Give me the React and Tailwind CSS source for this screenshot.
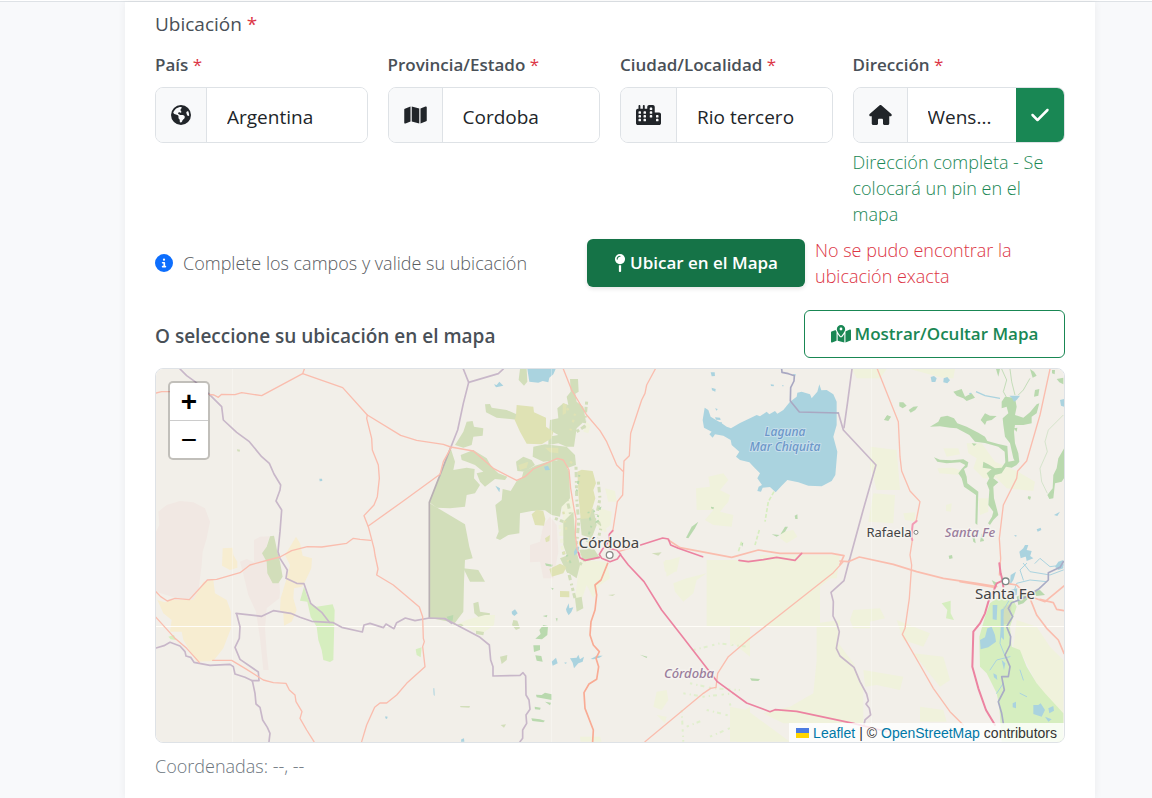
import React from "react";
import {
  FaEarthAmericas,
  FaMap,
  FaCity,
  FaHouse,
  FaCheck,
  FaMapPin,
  FaMapLocationDot,
  FaCircleInfo,
} from "react-icons/fa6";

const C = {
  scrub: "#d2deba",
  wood: "#b9d9ae",
  olive: "#dfe2b4",
  sand: "#f7edd1",
  rose: "#f1e8e3",
  water: "#aad3df",
  farm: "#f0f2dc",
  park: "#d6eebf",
  admin: "#c8b7c9",
  road: "#fabdae",
  trunk: "#ec83a1",
};

/* Each sheet holds shapes at three units per pixel, anchored at its own corner. */
function Sheet({ x, y, children }) {
  return <g transform={`translate(${x} ${y}) scale(0.33333)`}>{children}</g>;
}

function Lines({ color, width, paths }) {
  return (
    <g fill="none" stroke={color} strokeWidth={width} strokeLinejoin="round" strokeLinecap="round">
      {paths.map((d) => (
        <path key={d} d={d} />
      ))}
    </g>
  );
}

function Areas({ color, paths }) {
  return (
    <g fill={color}>
      {paths.map((d) => (
        <path key={d} d={d} />
      ))}
    </g>
  );
}

function MapDrawing() {
  return (
    <svg
      className="block h-[373px] w-full"
      viewBox="156 369 908 373"
      preserveAspectRatio="xMidYMid slice"
      role="img"
      aria-label="Mapa de la región de Córdoba"
    >
      <rect x="0" y="300" width="1300" height="500" fill="#f2efe9" />

      {/* Land cover */}
      <Sheet x={150} y={365}>
        <Areas
          color={C.rose}
          paths={[
            "M18 500 L28 480 L25 440 L50 420 L90 408 L130 412 L165 430 L180 470 L170 520 L158 560 L155 600 L145 680 L130 704 L80 700 L18 680 Z",
            "M312 525 L330 515 L358 514 L345 560 L385 600 L390 680 L388 700 L350 730 L345 790 L350 860 L356 915 L340 915 L330 820 L318 740 L295 690 L278 620 L270 590 L290 582 L312 592 Z",
          ]}
        />
        <Areas
          color={C.sand}
          paths={[
            "M218 550 L248 548 L250 570 L262 590 L262 608 L240 615 L216 602 Z",
            "M438 515 L450 535 L458 572 L486 580 L484 610 L465 650 L455 665 L432 670 L430 700 L440 735 L425 770 L402 782 L400 745 L390 735 L392 700 L410 640 L420 600 L405 570 L420 545 Z",
            "M22 705 L45 712 L60 705 L130 704 L160 650 L190 645 L195 685 L230 705 L243 740 L243 790 L220 850 L190 888 L140 890 L100 825 L95 800 L60 800 L65 765 L40 745 Z",
          ]}
        />
        <Areas
          color={C.scrub}
          paths={[
            "M360 514 L372 512 L376 530 L382 560 L390 590 L398 635 L385 655 L368 655 L352 625 L350 590 L336 565 L350 545 Z",
            "M261 253 L270 254 L269 260 L262 259 Z",
          ]}
        />
        <Areas color={C.water} paths={["M508 341 L516 341 L517 348 L509 349 Z"]} />
      </Sheet>
      <Sheet x={150} y={560}>
        <Areas
          color={C.park}
          paths={[
            "M462 80 L470 105 L480 130 L500 140 L548 133 L554 150 L550 300 L540 306 L520 300 L515 270 L505 240 L500 200 L482 170 L472 125 L450 122 Z",
            "M55 230 L72 225 L78 240 L62 238 Z",
            "M797 268 L815 262 L812 292 L800 285 Z",
          ]}
        />
        <Areas color={C.water} paths={["M706 469 L713 470 L711 477 L706 475 Z"]} />
      </Sheet>
      <Sheet x={420} y={365}>
        <Areas
          color={C.rose}
          paths={[
            "M330 540 L360 530 L370 480 L390 455 L410 480 L415 560 L400 640 L370 640 L360 590 L330 592 Z",
          ]}
        />
        <Areas
          color={C.farm}
          paths={[
            "M500 170 L512 180 L505 205 L490 200 Z",
            "M555 370 L585 378 L590 410 L565 410 Z",
            "M540 430 L575 440 L572 480 L545 500 L530 480 Z",
            "M420 400 L455 390 L465 470 L450 520 L420 510 L430 450 Z",
            "M480 585 L560 590 L570 640 L540 660 L520 700 L500 660 L480 720 L465 700 Z",
          ]}
        />
        <Areas
          color={C.scrub}
          paths={[
            "M28 412 L92 250 L105 290 L100 315 L140 308 L164 312 L162 340 L180 360 L165 385 L140 390 L135 425 L90 430 L50 428 Z",
            "M28 414 L135 478 L148 545 L158 580 L135 585 L132 650 L130 740 L100 780 L130 775 L130 785 L95 772 L28 758 Z",
            "M105 240 L130 200 L140 170 L158 168 L162 185 L190 190 L188 212 L160 215 L155 240 L130 248 Z",
            "M122 270 L160 255 L200 280 L215 305 L235 325 L262 335 L255 345 L225 342 L195 365 L180 350 L170 325 L190 320 L165 300 L140 290 L125 285 Z",
            "M195 118 L210 117 L215 128 L260 135 L300 152 L302 166 L270 162 L230 158 L198 142 Z",
            "M300 12 L320 12 L322 50 L312 62 L296 45 Z",
            "M450 42 L474 42 L476 80 L466 86 L470 110 L490 125 L497 165 L470 190 L462 245 L440 245 L415 235 L385 240 L385 215 L415 210 L388 195 L390 165 L415 160 L412 130 L430 115 L445 120 L440 95 L452 80 Z",
            "M340 245 L375 238 L440 245 L465 270 L468 300 L440 310 L410 285 L370 290 L338 275 Z",
            "M288 290 L310 275 L335 285 L345 300 L315 320 L292 318 Z",
            "M310 320 L345 302 L400 285 L430 290 L448 320 L450 400 L425 425 L420 455 L395 450 L375 436 L335 438 L300 445 L298 505 L265 510 L240 525 L228 520 L236 500 L226 420 L245 405 L248 372 L272 378 L290 348 L305 340 Z",
            "M430 470 L460 440 L470 560 L450 600 L430 540 Z",
            "M480 460 L520 430 L530 480 L515 520 L485 510 Z",
            "M420 580 L470 560 L480 600 L470 640 L440 620 Z",
            "M478 555 L520 548 L540 580 L490 590 Z",
            "M130 610 L175 615 L195 650 L150 650 Z",
            "M160 715 L175 710 L180 740 L210 745 L205 775 L185 765 L163 745 Z",
            "M465 700 L485 695 L490 730 L470 740 Z",
            "M695 565 L725 562 L715 572 Z",
          ]}
        />
        <Areas
          color={C.olive}
          paths={[
            "M290 120 L340 125 L342 142 L378 158 L378 185 L400 200 L395 220 L365 238 L320 236 L300 200 L284 165 L288 150 Z",
            "M472 320 L485 314 L518 318 L528 355 L520 375 L526 400 L508 460 L482 462 L476 400 Z",
            "M335 448 L350 434 L370 438 L376 462 L372 482 L345 480 Z",
            "M428 115 L440 118 L438 145 L428 150 Z",
            "M388 612 L420 596 L440 605 L430 625 L395 635 Z",
            "M420 678 L448 679 L448 697 L420 696 Z",
            "M295 300 L325 290 L320 308 L300 315 Z",
            "M375 248 L415 248 L415 265 L390 262 Z",
            "M375 520 L390 510 L388 528 L378 532 Z",
          ]}
        />
        {/* Broken hill cover west and north of the city */}
        <g fill="none" strokeWidth="9">
          <g stroke={C.scrub} strokeDasharray="9 7 16 11 5 8">
            <path d="M468 305 L470 400 L476 470 L470 540 M535 350 L540 400 L530 450 M440 400 L452 450 L450 520 M500 110 L492 190 M470 200 L500 180" />
            <path d="M430 560 L450 640 L465 700 M480 600 L500 560 L510 520 M520 460 L545 480 L535 520 M405 460 L430 470" />
          </g>
          <g stroke={C.wood} strokeWidth="6" strokeDasharray="5 13 9 17">
            <path d="M505 440 L515 480 L500 530 M478 330 L470 380 M520 440 L540 430 L530 470 L550 460 M440 570 L455 600" />
          </g>
          <g stroke={C.olive} strokeWidth="7" strokeDasharray="8 20 5 14">
            <path d="M440 130 L465 150 L450 200 M430 440 L440 500 M450 290 L465 300 M430 560 L445 590" />
          </g>
          <g stroke={C.farm} strokeDasharray="12 9">
            <path d="M545 470 L560 510 M420 480 L428 560 M490 600 L540 640" />
          </g>
        </g>
      </Sheet>
      <Sheet x={420} y={560}>
        <Areas
          color={C.farm}
          paths={[
            "M735 0 L760 0 L765 35 L740 50 Z",
            "M760 70 L800 55 L860 40 L860 200 L1200 200 L1200 0 L860 0 L860 40 L830 60 L820 100 L790 125 L765 95 Z",
            "M195 165 L225 165 L222 195 L180 225 L120 190 L140 180 Z",
            "M710 395 L740 390 L745 420 L725 450 L700 440 Z",
            "M710 465 L740 470 L735 490 Z",
            "M960 460 L990 440 L990 545 L950 545 Z",
            "M480 530 L540 530 L545 545 L482 545 Z",
            "M940 250 L990 200 L990 290 Z",
          ]}
        />
        <Areas
          color={C.wood}
          paths={[
            "M375 10 L398 14 L396 20 L378 17 Z",
            "M80 170 L100 165 L98 182 L85 182 Z",
            "M358 210 L370 195 L384 198 L382 225 L366 238 L346 236 L362 222 Z",
            "M340 256 L360 256 L360 270 L342 276 Z",
            "M346 286 L364 288 L368 305 L350 302 Z",
            "M348 404 L365 405 L375 398 L395 403 L395 420 L375 416 L350 412 Z",
            "M375 425 L393 428 L390 436 Z",
            "M344 440 L362 443 L360 449 L345 448 Z",
            "M334 475 L360 478 L375 482 L370 487 L337 483 Z",
            "M368 168 L382 165 L380 172 Z",
            "M407 175 L413 175 L411 185 Z",
            "M392 83 L401 85 L398 90 Z",
            "M660 284 L682 290 L680 294 Z",
          ]}
        />
        <Areas
          color={C.scrub}
          paths={[
            "M280 180 L292 182 L300 205 L288 210 L276 195 Z",
            "M168 212 L192 216 L190 226 L168 222 Z",
            "M240 290 L262 285 L260 300 L245 312 Z",
            "M120 438 L150 438 L148 443 L122 442 Z",
            "M242 495 L258 493 L252 503 Z",
            "M564 105 L586 103 L578 108 Z",
          ]}
        />
        <g fill="none" stroke="#e0efcd" strokeWidth="6" strokeDasharray="7 12 4 9 12 14">
          <path d="M820 270 L900 250 L980 260 M800 345 L850 340 M810 370 L880 385 L960 390 M790 400 L850 410 L940 400 M785 450 L790 545 M860 450 L940 470 M930 430 L945 540 M870 530 L940 500 M800 500 L850 480" />
        </g>
      </Sheet>
      <Sheet x={660} y={365}>
        <Areas
          color={C.farm}
          paths={[
            "M145 335 L190 325 L205 345 L180 375 L210 390 L205 410 L180 440 L220 450 L215 485 L160 480 L135 465 L160 435 L110 435 L108 370 L150 365 Z",
            "M365 500 L400 495 L412 515 L380 535 L360 520 Z",
            "M632 245 L710 255 L720 375 L650 375 L630 300 Z",
            "M640 385 L705 390 L700 475 L625 470 Z",
            "M575 12 L680 12 L660 40 L590 40 Z",
            "M300 570 L540 570 L530 640 L300 640 Z",
            "M10 590 L60 575 L50 620 L15 620 Z",
          ]}
        />
        <Areas
          color={C.wood}
          paths={[
            "M672 165 L680 152 L693 155 L685 168 Z",
            "M404 452 L412 448 L413 462 L406 462 Z",
            "M78 518 L95 485 L115 470 L105 490 L85 520 Z",
            "M335 508 L360 510 L375 485 L384 485 L375 500 L350 515 Z",
            "M153 425 L162 427 L160 433 L153 430 Z",
            "M242 535 L250 533 L247 545 Z",
          ]}
        />
        <g fill="none" stroke={C.park} strokeWidth="5" strokeDasharray="12 6">
          <path d="M342 380 L325 410 L315 470 M298 495 L285 540 M245 530 L235 560" />
        </g>
        <Areas
          color={C.water}
          paths={[
            "M134 128 L145 135 L152 155 L168 165 L185 175 L200 185 L213 190 L240 174 L270 160 L290 150 L300 154 L320 140 L328 148 L345 138 L352 146 L370 135 L390 110 L410 95 L412 83 L425 80 L450 88 L455 100 L472 80 L478 58 L484 76 L500 75 L520 88 L530 110 L530 180 L520 215 L532 260 L526 330 L515 348 L485 364 L445 362 L415 352 L382 345 L365 362 L347 382 L330 366 L308 368 L303 380 L292 378 L296 365 L306 360 L292 340 L300 325 L285 310 L268 292 L240 285 L228 275 L238 260 L215 240 L212 225 L190 212 L165 208 L158 218 L148 208 L155 200 L132 188 L128 165 Z",
            "M152 22 L164 22 L165 33 L155 34 Z",
            "M155 68 L167 72 L166 80 L156 76 Z",
            "M165 157 L180 158 L182 165 L168 164 Z",
            "M172 172 L186 172 L184 180 L172 178 Z",
            "M165 130 L173 132 L170 137 Z",
            "M332 58 L342 59 L341 64 L333 63 Z",
            "M366 60 L371 61 L369 65 Z",
            "M398 28 L407 27 L406 34 L399 33 Z",
          ]}
        />
      </Sheet>
      <Sheet x={420} y={365}>
        <Areas
          color={C.water}
          paths={[
            "M322 12 L407 12 L400 28 L388 38 L385 52 L368 48 L355 53 L328 50 Z",
            "M222 58 L230 60 L238 50 L250 62 L236 65 L228 67 Z",
            "M372 305 L384 302 L390 315 L376 316 Z",
            "M226 362 L240 370 L238 382 Z",
            "M462 560 L470 545 L478 545 L475 560 L463 572 Z",
          ]}
        />
      </Sheet>
      <Sheet x={420} y={560}>
        <Areas
          color={C.water}
          paths={[
            "M275 155 L285 148 L293 160 L283 168 L276 162 Z",
            "M438 148 L446 130 L448 145 L460 142 L454 156 L446 166 L440 155 Z",
            "M395 305 L408 293 L413 310 L398 317 Z",
            "M450 295 L470 293 L475 284 L480 298 L492 290 L488 305 L475 310 L462 325 L458 308 Z",
            "M512 297 L530 287 L548 287 L538 293 L520 298 Z",
            "M432 308 L440 307 L438 312 Z",
            "M40 385 L43 385 L44 408 L41 405 Z",
            "M124 538 L132 535 L133 545 L123 545 Z",
          ]}
        />
      </Sheet>
      <Sheet x={850} y={365}>
        <Areas
          color={C.farm}
          paths={[
            "M350 235 L395 235 L435 290 L500 318 L555 350 L550 378 L470 370 L440 340 L400 340 L370 310 L380 280 L355 265 Z",
            "M280 250 L325 250 L330 268 L290 275 Z",
            "M262 310 L310 308 L345 320 L330 330 L268 325 Z",
            "M385 400 L415 400 L415 440 L390 450 Z",
            "M160 445 L195 442 L195 470 L165 465 Z",
            "M288 420 L305 415 L303 440 L288 438 Z",
            "M180 12 L315 12 L310 40 L275 38 Z",
          ]}
        />
        <Areas
          color={C.wood}
          paths={[
            "M148 112 L160 112 L170 122 L158 130 L148 124 Z",
            "M176 135 L190 125 L204 124 L196 135 L182 143 Z",
            "M103 165 L112 150 L122 155 L115 165 Z",
            "M240 185 L265 170 L272 156 L292 152 L312 160 L322 175 L350 185 L385 203 L405 215 L412 228 L445 237 L472 243 L475 290 L502 285 L500 300 L485 308 L468 305 L455 325 L435 330 L430 340 L445 352 L430 365 L432 400 L440 430 L445 450 L430 465 L420 480 L414 475 L426 455 L430 440 L415 420 L418 375 L410 355 L418 340 L410 325 L425 312 L398 308 L400 290 L415 298 L435 310 L455 308 L466 292 L464 260 L445 245 L405 234 L375 230 L358 210 L320 190 L300 188 L270 184 Z",
            "M252 277 L270 284 L305 286 L340 283 L355 292 L352 306 L342 312 L350 335 L352 355 L385 380 L382 480 L376 475 L378 390 L342 365 L335 340 L325 325 L335 312 L346 300 L330 292 L290 295 L262 290 Z",
            "M455 110 L465 95 L495 98 L500 125 L495 150 L520 158 L540 142 L560 118 L568 115 L560 145 L545 155 L545 175 L520 180 L495 180 L492 200 L495 235 L505 265 L508 290 L500 300 L490 280 L480 235 L465 215 L460 180 L458 160 L475 145 L470 125 L455 130 Z",
            "M392 165 L405 145 L420 152 L440 153 L425 165 L410 168 L405 180 Z",
            "M310 80 L335 72 L345 95 L365 85 L375 98 L350 108 L340 100 L320 92 Z",
            "M645 245 L645 335 L635 350 L615 355 L610 400 L598 402 L592 390 L608 370 L610 330 L620 310 L625 280 Z",
            "M365 235 L380 236 L372 243 Z",
            "M535 393 L543 395 L540 405 L533 400 Z",
            "M438 12 L450 12 L445 35 Z",
            "M540 12 L552 20 L560 32 L548 38 Z",
            "M555 75 L568 72 L565 92 L552 95 Z",
            "M606 15 L615 15 L614 28 L606 25 Z",
            "M620 42 L640 38 L640 58 L628 52 Z",
            "M296 572 L306 570 L308 580 L298 582 Z",
            "M390 530 L395 505 L402 528 Z",
            "M366 510 L372 500 L377 535 L370 530 Z",
            "M490 190 L502 188 L500 200 Z",
          ]}
        />
        <g fill="none" stroke={C.wood} strokeWidth="2.5">
          <path d="M455 12 L470 45 L460 80 L470 98 M480 12 L485 50 L495 90 M540 40 L520 75 L505 90" />
          <path d="M640 150 L620 170 L595 195 L585 230 L592 260 L570 310 L575 350 L592 385" opacity="0.6" />
        </g>
        <Areas
          color={C.water}
          paths={[
            "M242 36 L252 33 L260 40 L256 51 L245 51 Z",
            "M281 40 L292 36 L300 46 L292 55 L280 52 Z",
            "M478 92 L510 92 L500 105 L492 110 L485 98 Z",
            "M508 560 L520 550 L525 540 L535 540 L530 555 L545 558 L540 575 L525 575 L512 580 Z",
            "M560 493 L572 488 L574 495 L563 500 Z",
            "M492 510 L500 511 L498 516 Z",
            "M630 105 L642 102 L642 125 L633 122 Z",
            "M612 450 L630 440 L622 453 Z",
            "M525 562 L550 580 L530 588 Z",
          ]}
        />
        <path d="M378 80 L405 92 L450 100 M358 86 L364 85" fill="none" stroke={C.water} strokeWidth="4" />
      </Sheet>
      <Sheet x={730} y={560}>
        <Areas
          color={C.farm}
          paths={[
            "M60 0 L330 0 L320 40 L270 80 L180 150 L100 200 L60 200 L0 260 L0 0 Z",
            "M260 190 L330 180 L325 250 L370 310 L400 380 L400 490 L160 490 L100 460 L180 440 L250 400 L260 300 Z",
            "M370 150 L450 145 L465 175 L420 185 L420 205 L370 205 L360 180 Z",
            "M500 180 L600 220 L580 260 L520 240 Z",
            "M550 280 L640 290 L660 360 L630 380 L590 330 Z",
            "M400 330 L520 350 L510 390 L440 375 L405 380 Z",
            "M570 440 L640 450 L650 485 L570 485 Z",
            "M860 180 L920 200 L960 260 L1000 300 L1000 460 L960 430 L920 370 L880 290 L850 260 Z",
            "M0 440 L50 450 L180 545 L0 545 Z",
          ]}
        />
        <Areas
          color={C.park}
          paths={[
            "M780 130 L800 115 L845 110 L860 140 L840 200 L845 260 L870 270 L890 320 L920 370 L945 400 L1000 460 L1000 545 L815 545 L808 440 L800 400 L770 340 L750 320 L748 230 L765 170 Z",
            "M635 130 L662 122 L662 160 L672 180 L648 175 L652 150 Z",
          ]}
        />
        <Areas color={C.scrub} paths={["M820 140 L845 130 L840 190 L815 195 Z"]} />
        <Areas
          color={C.wood}
          paths={[
            "M860 110 L890 95 L900 110 L880 130 L865 135 Z",
            "M900 95 L930 90 L945 105 L920 108 Z",
            "M60 355 L90 357 L85 363 L65 362 Z",
            "M785 60 L800 68 L795 80 Z",
          ]}
        />
        <Areas
          color={C.water}
          paths={[
            "M772 205 L785 200 L795 225 L798 245 L775 262 L752 268 L750 240 L765 232 Z",
            "M788 135 L802 135 L800 180 L788 178 Z",
            "M812 150 L820 145 L822 240 L812 230 Z",
            "M910 435 L925 435 L932 430 L945 450 L935 470 L910 462 Z",
            "M955 445 L970 438 L972 452 L958 460 Z",
            "M848 430 L858 425 L858 445 L848 442 Z",
            "M790 340 L800 345 L802 360 L792 352 Z",
            "M945 470 L965 478 L955 485 Z",
            "M815 300 L826 310 L822 330 Z",
            "M985 5 L1000 0 L1000 25 L985 30 L975 20 Z",
            "M842 45 L858 35 L850 60 L840 75 Z",
            "M840 90 L862 85 L860 105 L842 108 Z",
          ]}
        />
        <Lines
          color={C.water}
          width="3"
          paths={[
            "M1000 30 L960 45 L900 35 L880 10",
            "M950 65 L900 60 L860 70 L850 100 L820 150 L810 250 L830 300",
            "M1000 15 L960 20 L930 -5 L915 10",
            "M840 290 L800 300 L780 330 M820 370 L800 400",
            "M880 60 L870 30 L890 10",
            "M870 330 L880 360 M870 400 L890 410",
          ]}
        />
        <Lines
          color="#a9acc6"
          width="5"
          paths={[
            "M1000 5 L990 22 L955 38 L955 60 L925 88 L880 115 L845 128 L835 145 L848 170 L830 200 L842 230 L840 255 L825 285 L840 320 L835 350 L815 350 L823 390 L805 425 L815 460 L820 490",
          ]}
        />
      </Sheet>

      {/* Tile seams */}
      <path d="M156 626.5 H1064" stroke="#fffdf8" strokeWidth="1" />
      <path
        d="M232.5 369 V742 M551.5 369 V742 M871.5 369 V742"
        stroke="#ffffff"
        strokeOpacity="0.3"
        strokeWidth="1"
      />

      {/* Province borders */}
      <Sheet x={150} y={365}>
        <Lines
          color={C.admin}
          width="5"
          paths={[
            "M90 12 L110 32 L135 50 L178 88 L215 125 L220 165 L260 202 L298 230 L335 275 L358 295 L372 327 L392 360 L390 375 L378 408 L395 435 L390 500 L384 560 L390 580 L412 615 L408 640 L440 655 L462 656 L482 715 L515 742 L538 772",
          ]}
        />
        <Lines color="#b9b0b4" width="5" paths={["M838 758 L838 412 L902 248"]} />
      </Sheet>
      <Sheet x={150} y={560}>
        <Lines
          color={C.admin}
          width="5"
          paths={[
            "M258 160 L335 169 L370 152 L422 160 L450 172 L485 184 L550 188 L575 202 L637 216 L642 195 L660 190 L700 203 L708 192 L732 206 L740 188 L766 174 L795 182 L838 174 L885 176 L905 190",
            "M260 162 L270 200 L268 235 L255 262 L270 298 L325 336 L327 362 L305 362",
            "M18 264 L42 257 L60 247 L90 258 L105 275 L108 288 L122 292 L132 307 L180 316 L240 313 L250 320 L255 342 L285 352 L307 362 L315 400 L318 432 L330 442 L338 480 L352 502 L360 520 L357 545",
          ]}
        />
      </Sheet>
      <Sheet x={420} y={365}>
        <Lines
          color={C.admin}
          width="5"
          paths={[
            "M130 12 L146 52 L130 115 L113 195 L92 248",
            "M146 52 L235 26 L250 12",
          ]}
        />
      </Sheet>
      <Sheet x={420} y={560}>
        <Lines
          color={C.admin}
          width="5"
          paths={[
            "M75 176 L180 232 L208 255 L212 300 L219 320 L219 348 L300 346 L309 338 L317 348 L318 405 L327 420 L330 448 L318 465 L320 490 L308 510 L308 535 L300 545",
          ]}
        />
      </Sheet>
      <Sheet x={660} y={365}>
        <Lines
          color={C.admin}
          width="5"
          paths={[
            "M535 144 L550 195 L648 300 L608 440 L567 590",
            "M576 12 L563 110 L552 188",
          ]}
        />
        <Lines
          color="#a9a8c2"
          width="5"
          paths={["M365 12 L366 22 L385 26 L403 32 L402 48 L392 68 L391 108 L418 141 L535 144"]}
        />
      </Sheet>
      <Sheet x={730} y={560}>
        <Lines
          color={C.admin}
          width="5"
          paths={[
            "M358 0 L342 62 L303 97 L310 125 L309 168 L320 190 L328 215 L319 265 L330 288 L372 322 L390 365 L410 402 L415 422 L408 432 L418 445 L422 465 L405 480 L402 495",
          ]}
        />
      </Sheet>

      {/* Roads */}
      <Sheet x={150} y={365}>
        <Lines
          color={C.road}
          width="4"
          paths={[
            "M18 84 L35 80 L60 80 M178 88 L192 90 L205 97 L215 88 L255 89 L275 83 L335 92 L458 26 L463 12",
            "M458 26 L578 68 L652 150 L752 211 L800 226 L880 238 L902 246 L970 258 L1030 310 L1100 346 L1125 335 L1150 312 L1222 280 L1240 285 L1257 315 L1262 370 L1272 430 L1278 460 L1276 510 L1282 555 L1290 570",
            "M652 150 L650 160 L665 220 L667 255 L685 300 L688 340 L682 395 L672 420 L642 452 L655 485 L672 550 L675 570 L684 612 L680 630 L730 660 L808 726 L818 755 L820 820 L823 830 L818 845 L825 905 L770 955 L740 990 L710 1014 L690 1014 L674 1027 L650 1080 L635 1130",
            "M655 483 L760 408 L870 328 L880 290 L902 250",
            "M18 680 L32 695 L52 708 L75 700 L118 704 L172 645 L200 643 L270 623 L300 600 L355 585 L390 576 L425 557 L472 545 L515 546 L590 535 L610 520 L630 523 L662 526",
            "M18 757 L48 790 L75 820 L110 850 L148 892 M188 886 L245 886 L290 913 L340 945 L370 953 L408 955 L418 975 L435 990 L438 1010 L456 1040 L450 1060 L470 1095 L492 1130",
          ]}
        />
      </Sheet>
      <Sheet x={420} y={365}>
        <Lines
          color={C.road}
          width="4"
          paths={[
            "M430 12 L455 75 L500 150 L540 197 L560 230 L575 265 L590 300 L608 318",
            "M706 12 L680 60 L675 85 L665 105 L632 205 L628 272 L612 288 L608 390 L592 410 L578 500 M595 560 L655 542",
          ]}
        />
      </Sheet>
      <Sheet x={420} y={560}>
        <Lines
          color="#f9ab94"
          width="5"
          paths={[
            "M563 10 L543 60 L525 75 L530 105 L525 150 L513 185 L510 225 L520 255 L538 275 L528 295 L536 320 L530 358 L507 372 L492 398 L495 445 L520 510 L518 545",
          ]}
        />
        <Lines
          color={C.road}
          width="4"
          paths={["M675 545 L850 400 L872 385 L888 382 L893 340 L925 290 L990 235 L1060 180 L1240 38 L1270 5"]}
        />
      </Sheet>
      <Sheet x={660} y={365}>
        <Lines
          color={C.road}
          width="5"
          paths={[
            "M25 525 L60 548 L215 577 L295 555 L360 565 L515 565 L552 572 L540 598",
            "M540 588 L565 590 L598 576 L700 598 L770 620 L850 640 L950 655 L1010 665",
          ]}
        />
        <Lines
          color={C.road}
          width="4"
          paths={["M652 12 L715 170 L720 275 L725 318 L750 378 L780 410 L768 470"]}
        />
      </Sheet>
      <Sheet x={850} y={365}>
        <Lines
          color={C.road}
          width="4"
          paths={[
            "M187 525 L180 570 L185 600 L178 700 L165 790 L157 808 L210 900 L250 970 L300 1040 L340 1080",
            "M600 12 L570 150 L530 288 L503 318 L500 340 L460 420 L448 520 L452 580 L448 630",
          ]}
        />
      </Sheet>
      <Sheet x={730} y={560}>
        <Lines
          color={C.road}
          width="5"
          paths={[
            "M690 65 L795 82 M830 70 L860 75 L900 115 L920 165 L950 205 L985 240 L1002 280",
            "M915 115 L945 125 L1002 78 M930 118 L970 128 L980 148 L1002 152",
          ]}
        />
        <Lines
          color={C.trunk}
          width="6"
          paths={[
            "M808 10 L812 40 L818 62 L800 70 L790 95 L775 125 L765 160 L750 190 L730 215 L727 320 L745 385 L768 450 L795 495",
            "M817 60 L820 80",
          ]}
        />
      </Sheet>
      <Sheet x={420} y={365}>
        <Lines
          color={C.trunk}
          width="5"
          paths={[
            "M578 497 L568 508 L566 530 L548 552 L538 568 L545 580 L570 590 L592 582 L602 568 L590 555 L568 550",
            "M475 563 L480 578 L495 586 L538 577 M602 570 L625 600 L672 650 L725 735 L790 818 L892 950 L980 1014 L1050 1040 L1065 1034 L1130 1039 L1300 1075 L1400 1100",
            "M662 540 L728 519 L745 522 L752 540 L775 550 L848 575",
            "M957 586 L985 590 L1030 584 L1070 577 L1125 586 L1145 565",
          ]}
        />
        <circle cx="569" cy="570" r="10" fill="#fff" stroke="#8a8a88" strokeWidth="4" />
      </Sheet>
      <Sheet x={850} y={365}>
        <Lines color="#f39ab4" width="6" paths={["M200 468 L188 478 L184 515 L187 525"]} />
        <circle cx="198" cy="502" r="6" fill="#fff" stroke="#7d7d7b" strokeWidth="3" />
        <circle cx="467" cy="649" r="10" fill="#fff" stroke="#7d8a86" strokeWidth="4" />
      </Sheet>

      {/* Place names */}
      <g
        fontFamily="'Noto Sans', sans-serif"
        textAnchor="middle"
        stroke="#f7f5f1"
        strokeOpacity="0.8"
        strokeWidth="3"
        strokeLinejoin="round"
        paintOrder="stroke"
      >
        <text x="609" y="548" fontSize="15" fill="#444">Córdoba</text>
        <text x="889" y="537" fontSize="13" fill="#444">Rafaela</text>
        <text x="1005" y="599" fontSize="15" fill="#444">Santa Fe</text>
        <g fontStyle="italic">
          <text x="689" y="678" fontSize="13" fontWeight="500" fill="#9a7d9c">Córdoba</text>
          <text x="970" y="537" fontSize="13" fontWeight="500" fill="#9a7d9c">Santa Fe</text>
          <g stroke="#cfe2ee" strokeWidth="2" fill="#6c97c9" fontSize="12" fontWeight="500">
            <text x="785" y="436">Laguna</text>
            <text x="785" y="451">Mar Chiquita</text>
          </g>
        </g>
      </g>
    </svg>
  );
}

function Required() {
  return <span className="font-normal text-[#dc3545]">*</span>;
}

function Field({ id, label, icon: Icon, iconClass, value, valid }) {
  return (
    <div className="min-w-0">
      <label htmlFor={id} className="block text-[17px] leading-[26px] font-semibold text-[#495057]">
        {label} <Required />
      </label>
      <div className="mt-[9px] flex h-14 overflow-hidden rounded-lg border border-[#dee2e6] bg-white">
        <span className="flex shrink-0 items-center border-r border-[#dee2e6] bg-[#f8f9fa] px-[15px] text-[#212529]">
          <Icon aria-hidden="true" className={iconClass} />
        </span>
        <input
          id={id}
          type="text"
          defaultValue={value}
          className="w-full min-w-0 flex-1 bg-white pt-1 pl-5 text-[19px] text-ellipsis text-[#212529] outline-none"
        />
        {valid && (
          <button
            type="button"
            aria-label="Dirección válida"
            className="flex w-12 shrink-0 items-center justify-center bg-[#198754] text-white"
          >
            <FaCheck aria-hidden="true" className="h-5 w-[18px]" />
          </button>
        )}
      </div>
      {valid && (
        <p className="mt-[6px] text-[18px] leading-[26px] font-light text-[#198754]">
          Dirección completa - Se colocará un pin en el mapa
        </p>
      )}
    </div>
  );
}

export default function App() {
  return (
    <div className="min-h-screen bg-[#f8f9fb] font-['Open_Sans','Noto_Sans',sans-serif]">
      <header className="h-[2px] border-b border-[#dee2e6] bg-white" />
      <main className="pr-[57px] pl-[125px]">
        <form
          className="min-h-[796px] bg-white px-[30px] pt-2 pb-5 shadow-[0_0_8px_rgba(0,0,0,0.06)]"
          onSubmit={(e) => e.preventDefault()}
        >
          <h2 className="text-[19px] leading-[28px] font-medium text-[#495057]">
            Ubicación <Required />
          </h2>

          <div className="mt-[14px] grid grid-cols-4 gap-5">
            <Field id="pais" label="País" icon={FaEarthAmericas} iconClass="h-5 w-5" value="Argentina" />
            <Field id="provincia" label="Provincia/Estado" icon={FaMap} iconClass="h-5 w-[23px]" value="Cordoba" />
            <Field id="ciudad" label="Ciudad/Localidad" icon={FaCity} iconClass="h-5 w-[25px]" value="Rio tercero" />
            <Field id="direccion" label="Dirección" icon={FaHouse} iconClass="h-5 w-[23px]" value="Wens..." valid />
          </div>

          <div className="mt-[10px] flex items-center justify-between">
            <p className="flex items-center gap-[10px] text-[18px] leading-[26px] font-light text-[#595c5f]">
              <FaCircleInfo aria-hidden="true" className="size-[18px] text-[#0d6efd]" />
              Complete los campos y valide su ubicación
            </p>
            <div className="flex items-center gap-[10px]">
              <button
                type="button"
                className="flex h-12 w-[218px] items-center justify-center gap-1 rounded-md bg-[#157347] text-[17px] font-semibold text-white shadow-[0_2px_4px_rgba(0,0,0,0.1)]"
              >
                <FaMapPin aria-hidden="true" className="h-[18px] w-[12px]" />
                Ubicar en el Mapa
              </button>
              <p className="w-[250px] text-[18px] leading-[26px] font-light text-[#dc3545]">
                No se pudo encontrar la ubicación exacta
              </p>
            </div>
          </div>

          <div className="mt-[21px] flex items-center justify-between">
            <h3 className="pt-1 text-[19px] leading-[28px] font-semibold text-[#495057]">
              O seleccione su ubicación en el mapa
            </h3>
            <button
              type="button"
              className="flex h-12 w-[261px] items-center justify-center gap-1 rounded-md border border-[#198754] bg-white text-[17px] font-semibold text-[#198754]"
            >
              <FaMapLocationDot aria-hidden="true" className="h-[18px] w-[20px]" />
              Mostrar/Ocultar Mapa
            </button>
          </div>

          <div className="relative mt-[10px] overflow-hidden rounded-lg border border-[#dee2e6]">
            <MapDrawing />
            <div className="absolute top-3 left-3 flex w-[42px] flex-col overflow-hidden rounded-[5px] border-2 border-black/20 bg-white bg-clip-padding font-['Liberation_Sans',sans-serif] text-[28px] leading-none text-black">
              <button type="button" aria-label="Acercar" className="flex h-[38px] items-center justify-center border-b border-[#ccc] font-bold">
                +
              </button>
              <button type="button" aria-label="Alejar" className="flex h-[37px] items-center justify-center">
                −
              </button>
            </div>
            <div className="absolute right-0 bottom-0 flex h-[19px] items-center gap-1 bg-white/80 px-[7px] font-['Liberation_Sans',sans-serif] text-[14px] leading-none whitespace-nowrap text-[#333]">
              <a href="#leaflet" className="flex items-center gap-1 text-[#0078a8]">
                <svg aria-hidden="true" viewBox="0 0 12 8" className="h-[10px] w-[13px]" preserveAspectRatio="none">
                  <path fill="#4C7BE1" d="M0 0h12v4H0z" />
                  <path fill="#FFD500" d="M0 4h12v4H0z" />
                </svg>
                Leaflet
              </a>
              <span>| ©</span>
              <a href="#openstreetmap" className="text-[#0078a8]">
                OpenStreetMap
              </a>
              <span>contributors</span>
            </div>
          </div>

          <p className="mt-[10px] text-[18px] leading-[26px] font-light text-[#6c757d]">Coordenadas: --, --</p>
        </form>
      </main>
    </div>
  );
}
